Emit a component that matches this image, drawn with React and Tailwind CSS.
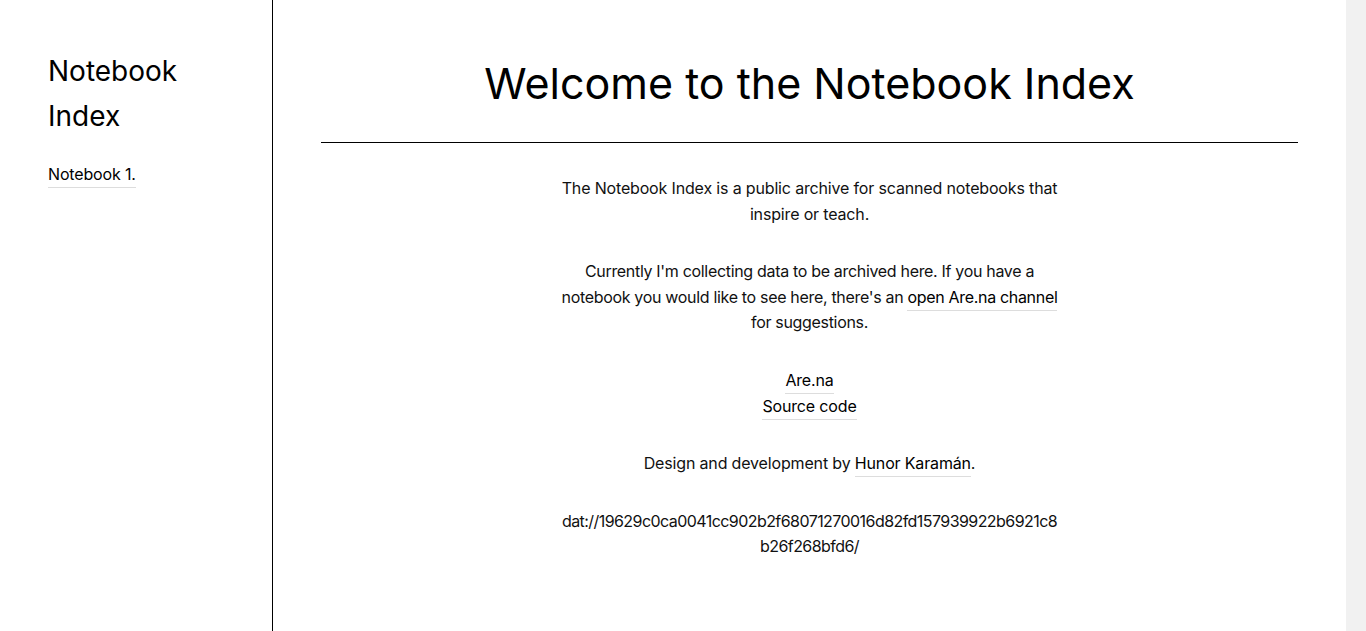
export default function App() {
  const link = "border-b border-[#dddddd] pb-[3px] text-black";
  return (
    <div
      className="flex h-[631px] w-full overflow-hidden bg-white text-[#111]"
      style={{ fontFamily: "Inter, 'Noto Sans', sans-serif" }}
    >
      {/* Sidebar */}
      <aside className="w-[273px] shrink-0 border-r border-black pl-12 pt-[49px]">
        <h2 className="text-[28px] leading-[45px] font-normal text-black">
          Notebook
          <br />
          Index
        </h2>
        <ul className="mt-[23px] text-base leading-[25.6px] tracking-[-0.01em]">
          <li>
            <a href="#" className={link}>
              Notebook 1.
            </a>
          </li>
        </ul>
      </aside>

      {/* Main */}
      <main className="flex-1 px-12 pt-[55px]">
        <h1 className="border-b border-black pb-[31px] text-center text-[43px] leading-[56px] font-normal text-black">
          Welcome to the Notebook Index
        </h1>
        <div className="mx-auto mt-[33px] flex max-w-[502px] flex-col gap-8 text-center text-base leading-[25.6px] tracking-[-0.01em]">
          <p>
            The Notebook Index is a public archive for scanned notebooks that
            inspire or teach.
          </p>
          <p className="tracking-[-0.02em]">
            Currently I'm collecting data to be archived here. If you have a
            notebook you would like to see here, there's an{" "}
            <a href="#" className={link}>
              open Are.na channel
            </a>{" "}
            for suggestions.
          </p>
          <p>
            <a href="#" className={link}>
              Are.na
            </a>
            <br />
            <a href="#" className={link}>
              Source code
            </a>
          </p>
          <p>
            Design and development by{" "}
            <a href="#" className={link}>
              Hunor Karamán
            </a>
            .
          </p>
          <p className="break-all tracking-[-0.035em]">
            dat://19629c0ca0041cc902b2f68071270016d82fd157939922b6921c8b26f268bfd6/
          </p>
        </div>
      </main>

      {/* Scrollbar track */}
      <div className="w-5 shrink-0 bg-[#f1f1f1]" />
    </div>
  );
}
